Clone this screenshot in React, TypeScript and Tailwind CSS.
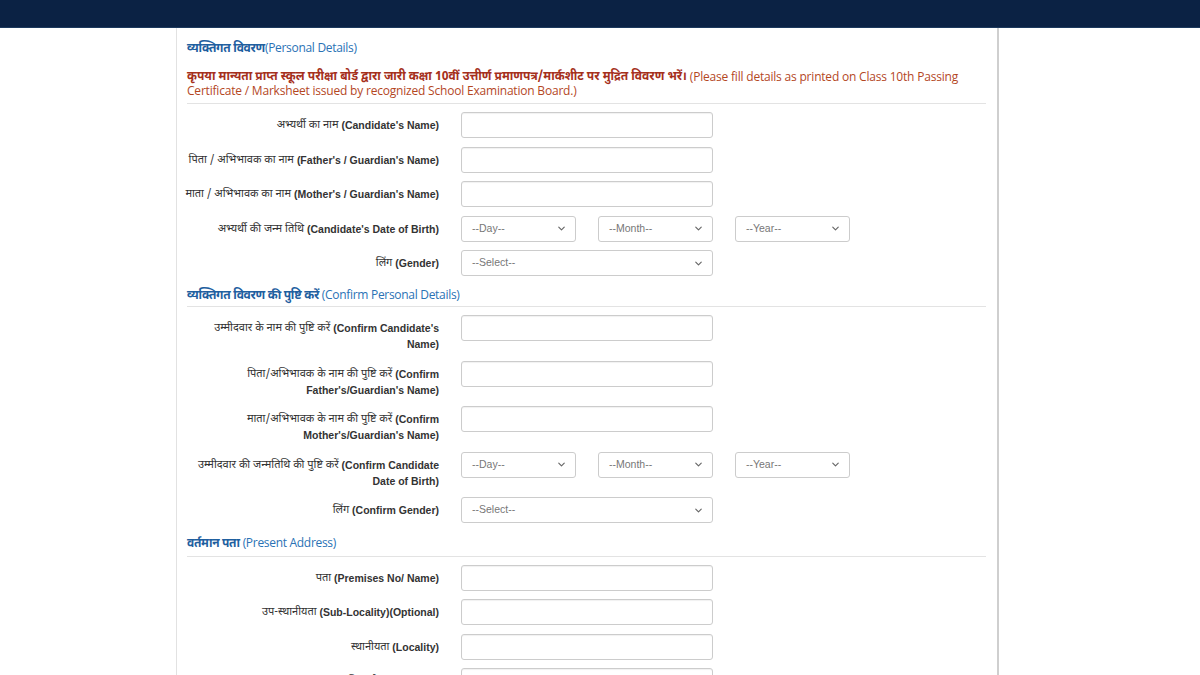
import React from 'react';
import { ChevronDown } from 'lucide-react';

const hindi = '"Noto Sans Devanagari", "Noto Sans", "Liberation Sans", sans-serif';

const SectionTitle: React.FC<{ hi: string; en: string; gap?: boolean }> = ({ hi, en, gap }) => (
  <h3 className="text-[12px] leading-[16px] tracking-[-0.3px] text-[#2a72b5] font-['Open_Sans',sans-serif]">
    <span className="font-bold text-[#1f5f9f]" style={{ fontFamily: hindi }}>{hi}</span>
    {gap ? ' ' : ''}
    {en}
  </h3>
);

const Label: React.FC<{ hi: string; en: string }> = ({ hi, en }) => (
  <div className="-ml-[4px] w-[256px] shrink-0 pt-[5px] text-right text-[10.5px] leading-[16px] text-[#333] font-['Liberation_Sans',sans-serif]">
    <span style={{ fontFamily: hindi }} className="align-top text-[11px] leading-[16px]">{hi}</span>{' '}
    <span className="align-top font-bold leading-[16px]">{en}</span>
  </div>
);

const TextBox: React.FC = () => (
  <div className="h-[26px] w-[252px] rounded-[3px] border border-[#ccc] bg-white shadow-[inset_0_1px_1px_rgba(0,0,0,0.06)]" />
);

const Select: React.FC<{ text: string; wide?: boolean }> = ({ text, wide }) => (
  <div
    className={`flex h-[26px] ${wide ? 'w-[252px]' : 'w-[115px]'} items-center justify-between rounded-[3px] border border-[#ccc] bg-white pl-[10px] pr-[8px] text-[10.5px] text-[#777] font-['Liberation_Sans',sans-serif]`}
  >
    <span>{text}</span>
    <ChevronDown size={11} strokeWidth={2.5} className="text-[#666]" />
  </div>
);

const DateSelects: React.FC = () => (
  <div className="flex gap-[22px]">
    <Select text="--Day--" />
    <Select text="--Month--" />
    <Select text="--Year--" />
  </div>
);

const Row: React.FC<{ hi: string; en: string; children: React.ReactNode }> = ({ hi, en, children }) => (
  <div className="mb-[8.5px] flex items-start gap-[22px]">
    <Label hi={hi} en={en} />
    {children}
  </div>
);

const Rule: React.FC = () => <div className="h-px bg-[#e3e3e3]" />;

export default function App() {
  return (
    <div className="h-[675px] w-[1200px] overflow-hidden bg-white">
      <div className="h-[28px] border-b border-[#1d3a5e] bg-[#0b2244]" />
      <div className="ml-[176px] w-[823px] border-l border-r-2 border-l-[#e2e2e2] border-r-[#cfcfcf] pb-[40px] pl-[10px] pr-[11px] pt-[12px]">
        <SectionTitle hi="व्यक्तिगत विवरण" en="(Personal Details)" />
        <p className="mt-[13px] text-[12px] leading-[14px] tracking-[-0.2px] text-[#b4471f] font-['Open_Sans',sans-serif]">
          <span className="align-top text-[12px] font-bold leading-[14px] tracking-normal text-[#a5301c]" style={{ fontFamily: hindi }}>
            कृपया मान्यता प्राप्त स्कूल परीक्षा बोर्ड द्वारा जारी कक्षा 10वीं उत्तीर्ण प्रमाणपत्र/मार्कशीट पर मुद्रित विवरण भरें।
          </span>{' '}
          <span className="align-top">(Please fill details as printed on Class 10th Passing Certificate / Marksheet issued by recognized School Examination Board.)</span>
        </p>
        <div className="mt-[5px]">
          <Rule />
        </div>

        <div className="mt-[8px]">
          <Row hi="अभ्यर्थी का नाम" en="(Candidate's Name)"><TextBox /></Row>
          <Row hi="पिता / अभिभावक का नाम" en="(Father's / Guardian's Name)"><TextBox /></Row>
          <Row hi="माता / अभिभावक का नाम" en="(Mother's / Guardian's Name)"><TextBox /></Row>
          <Row hi="अभ्यर्थी की जन्म तिथि" en="(Candidate's Date of Birth)"><DateSelects /></Row>
          <Row hi="लिंग" en="(Gender)"><Select text="--Select--" wide /></Row>
        </div>

        <div className="mt-[11px]">
          <SectionTitle hi="व्यक्तिगत विवरण की पुष्टि करें" en="(Confirm Personal Details)" gap />
        </div>
        <div className="mt-[2px]">
          <Rule />
        </div>

        <div className="mt-[8px]">
          <Row hi="उम्मीदवार के नाम की पुष्टि करें" en="(Confirm Candidate's Name)"><TextBox /></Row>
          <Row hi="पिता/अभिभावक के नाम की पुष्टि करें" en="(Confirm Father's/Guardian's Name)"><TextBox /></Row>
          <Row hi="माता/अभिभावक के नाम की पुष्टि करें" en="(Confirm Mother's/Guardian's Name)"><TextBox /></Row>
          <Row hi="उम्मीदवार की जन्मतिथि की पुष्टि करें" en="(Confirm Candidate Date of Birth)"><DateSelects /></Row>
          <Row hi="लिंग" en="(Confirm Gender)"><Select text="--Select--" wide /></Row>
        </div>

        <div className="mt-[11.5px]">
          <SectionTitle hi="वर्तमान पता" en="(Present Address)" gap />
        </div>
        <div className="mt-[4px]">
          <Rule />
        </div>

        <div className="mt-[8px]">
          <Row hi="पता" en="(Premises No/ Name)"><TextBox /></Row>
          <Row hi="उप-स्थानीयता" en="(Sub-Locality)(Optional)"><TextBox /></Row>
          <Row hi="स्थानीयता" en="(Locality)"><TextBox /></Row>
          <Row hi="पिन कोड" en="(Pin Code)"><TextBox /></Row>
        </div>
      </div>
    </div>
  );
}
